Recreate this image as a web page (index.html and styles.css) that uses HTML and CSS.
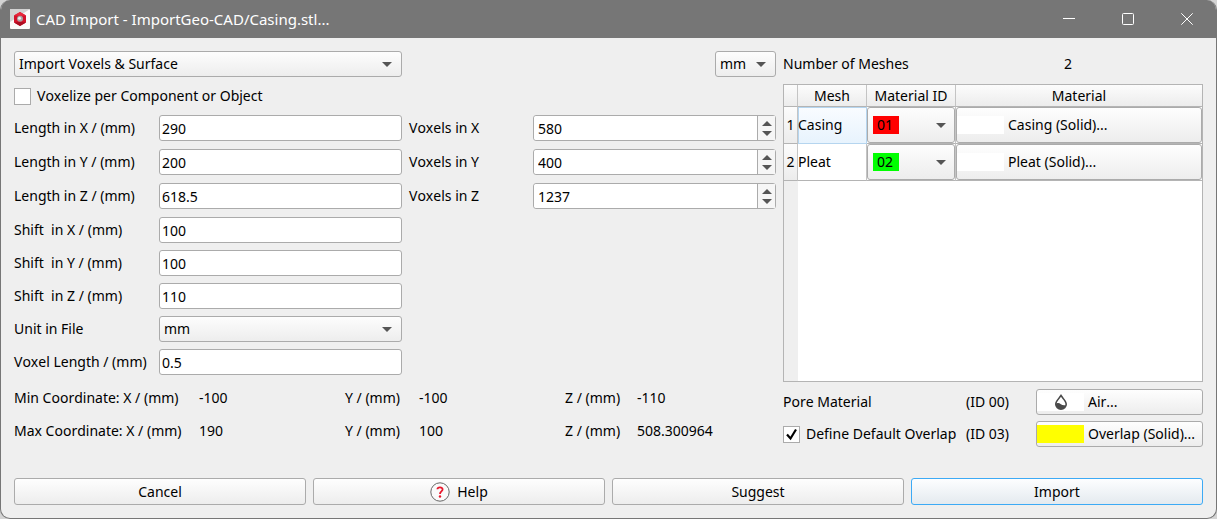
FILE: index.html
```
<!DOCTYPE html>
<html lang="en">
<head>
  <meta charset="UTF-8">
  <meta name="viewport" content="width=device-width, initial-scale=1.0">
  <title>CAD Import</title>
  <link rel="stylesheet" href="styles.css">
</head>
<body>

<section class="window">
  <header class="title-bar">
    <svg class="app-icon" viewBox="0 0 20 20">
      <rect width="20" height="20" rx="1" fill="#fafafa"/>
      <path d="M0 0H20L0 13Z" fill="#d2d2d2"/>
      <path d="M10 3L16 6.5V13.5L10 17L4 13.5V6.5Z" fill="#d3122a"/>
      <path d="M4 6.5L10 3L16 6.5L10 7Z" fill="#e8283c"/>
      <path d="M4 13.5L10 17L16 13.5L10 13Z" fill="#a80c20"/>
      <circle cx="10" cy="9.8" r="3" fill="#a9a2a4"/>
      <circle cx="9.5" cy="9.2" r="1.5" fill="#eee"/>
    </svg>
    <h1>CAD Import - ImportGeo-CAD/Casing.stl...</h1>
    <div class="window-buttons">
      <button aria-label="Minimize"><svg viewBox="0 0 12 12"><path d="M0 5.5H12"/></svg></button>
      <button aria-label="Maximize"><svg viewBox="0 0 12 12"><rect x=".5" y=".5" width="11" height="11" rx="1"/></svg></button>
      <button aria-label="Close"><svg viewBox="0 0 12 12"><path d="M.3 .3L11.7 11.7M11.7 .3L.3 11.7"/></svg></button>
    </div>
  </header>

  <main class="content">
    <section class="settings">
      <div class="mode-row">
        <select class="mode" aria-label="Import mode"><option>Import Voxels &amp; Surface</option></select>
        <select class="unit" aria-label="Unit"><option>mm</option></select>
      </div>
      <label class="check"><input type="checkbox"> Voxelize per Component or Object</label>

      <div class="fields">
        <div class="form-group lengths">
          <label for="length-x">Length in X / (mm)</label>
          <input id="length-x" value="290">
          <label for="length-y">Length in Y / (mm)</label>
          <input id="length-y" value="200">
          <label for="length-z">Length in Z / (mm)</label>
          <input id="length-z" value="618.5">
        </div>
        <div class="form-group voxels">
          <label for="voxels-x">Voxels in X</label>
          <div class="spin">
            <input id="voxels-x" value="580">
            <button class="up" aria-label="Increase X"></button>
            <button class="down" aria-label="Decrease X"></button>
          </div>
          <label for="voxels-y">Voxels in Y</label>
          <div class="spin">
            <input id="voxels-y" value="400">
            <button class="up" aria-label="Increase Y"></button>
            <button class="down" aria-label="Decrease Y"></button>
          </div>
          <label for="voxels-z">Voxels in Z</label>
          <div class="spin">
            <input id="voxels-z" value="1237">
            <button class="up" aria-label="Increase Z"></button>
            <button class="down" aria-label="Decrease Z"></button>
          </div>
        </div>
        <div class="form-group shifts">
          <label for="shift-x">Shift&nbsp; in X / (mm)</label>
          <input id="shift-x" value="100">
          <label for="shift-y">Shift&nbsp; in Y / (mm)</label>
          <input id="shift-y" value="100">
          <label for="shift-z">Shift&nbsp; in Z / (mm)</label>
          <input id="shift-z" value="110">
          <label for="file-unit">Unit in File</label>
          <select id="file-unit"><option>mm</option></select>
          <label for="voxel-length">Voxel Length / (mm)</label>
          <input id="voxel-length" value="0.5">
        </div>
      </div>

      <div class="coordinates">
        <span>Min Coordinate: X / (mm)</span><span>-100</span>
        <span>Y / (mm)</span><span>-100</span>
        <span>Z / (mm)</span><span>-110</span>
        <span>Max Coordinate: X / (mm)</span><span>190</span>
        <span>Y / (mm)</span><span>100</span>
        <span>Z / (mm)</span><span>508.300964</span>
      </div>
    </section>

    <section class="meshes">
      <div class="mesh-count"><span>Number of Meshes</span><span>2</span></div>
      <div class="mesh-list">
        <table>
          <colgroup>
            <col class="col-no"><col class="col-mesh"><col class="col-id"><col>
          </colgroup>
          <thead>
            <tr><th></th><th>Mesh</th><th>Material ID</th><th>Material</th></tr>
          </thead>
          <tbody>
            <tr>
              <th>1</th>
              <td class="selected">Casing</td>
              <td><select class="material-id red" aria-label="Material ID of Casing"><option>01</option></select></td>
              <td><button class="material"><span class="swatch"></span>Casing (Solid)...</button></td>
            </tr>
            <tr>
              <th>2</th>
              <td>Pleat</td>
              <td><select class="material-id green" aria-label="Material ID of Pleat"><option>02</option></select></td>
              <td><button class="material"><span class="swatch"></span>Pleat (Solid)...</button></td>
            </tr>
          </tbody>
        </table>
      </div>
      <div class="default-materials">
        <span>Pore Material</span>
        <span>(ID 00)</span>
        <button class="material">
          <span class="swatch">
            <svg viewBox="0 0 14 18">
              <path d="M7 1C5 4.500 1 8 1 11.200A6 5.800 0 0 0 13 11.200C13 8 9 4.500 7 1Z" fill="#4a4a4a"/>
              <path d="M7 3.800C5.500 6.300 2.800 8.600 2.600 10.600C5.500 8.600 7.500 13.300 11.300 12.200C12.200 9.300 8.500 6.300 7 3.800Z" fill="#fff"/>
            </svg>
          </span>Air...
        </button>
        <label class="check"><input type="checkbox" checked> Define Default Overlap</label>
        <span>(ID 03)</span>
        <button class="material"><span class="swatch yellow"></span>Overlap (Solid)...</button>
      </div>
    </section>
  </main>

  <footer class="actions">
    <button>Cancel</button>
    <button>
      <svg class="help-icon" viewBox="0 0 20 20">
        <circle cx="10" cy="10" r="9.200" fill="#fafafa" stroke="#666"/>
        <path d="M7.400 7.300C7.600 4.700 12.700 4.700 12.600 7.500C12.500 9.400 10 9.600 10 12" fill="none" stroke="#e8182c" stroke-width="1.800"/>
        <circle cx="10" cy="14.500" r="1.200" fill="#e8182c"/>
      </svg>
      Help
    </button>
    <button>Suggest</button>
    <button class="primary">Import</button>
  </footer>
</section>

</body>
</html>
```
FILE: styles.css
```
* {
  box-sizing: border-box;
}
body {
  margin: 0;
  background-color: #d4d4d4;
}
body, button, input, select {
  font-family: "Noto Sans", sans-serif;
  font-size: 14px;
  font-kerning: none;
  line-height: 20px;
  color: #000;
}
.window {
  display: flex;
  flex-direction: column;
  min-height: 100vh;
  border: 1px solid #767676;
  border-top: none;
  border-radius: 10px;
  background-color: #efefef;
  overflow: hidden;
}

/* Title bar */
.title-bar {
  display: flex;
  align-items: center;
  height: 38px;
  padding-left: 9px;
  background-color: #767676;
}
.title-bar h1 {
  flex: 1;
  margin: 0 0 0 6px;
  font-size: 15px;
  font-weight: normal;
  color: #fff;
}
.app-icon {
  width: 20px;
  height: 20px;
}
.window-buttons {
  display: flex;
}
.window-buttons button {
  display: flex;
  justify-content: center;
  align-items: center;
  width: 59px;
  height: 38px;
  padding: 0;
  border: none;
  background: none;
}
.window-buttons svg {
  width: 12px;
  height: 12px;
  fill: none;
  stroke: #fff;
}

/* Controls */
input, select, .material, .actions button {
  height: 26px;
  margin: 0;
  border: 1px solid #ababab;
  border-radius: 3px;
}
input {
  width: 100%;
  min-width: 0;
  padding: 0 2px;
  background-color: #fff;
}
select {
  appearance: none;
  width: 100%;
  padding: 0 4px;
  background: url("data:image/svg+xml,%3Csvg xmlns='http://www.w3.org/2000/svg' width='10' height='5'%3E%3Cpath d='M0 0H10L5 5Z' fill='%23555'/%3E%3C/svg%3E") no-repeat right 9px center, linear-gradient(#fdfdfd, #ededed);
}
.material, .actions button {
  background: linear-gradient(#fefefe, #ededed);
}
.check {
  display: flex;
  align-items: center;
  gap: 6px;
}
.check input {
  appearance: none;
  flex: none;
  width: 17px;
  height: 17px;
  padding: 0;
  border-radius: 0;
}
.check input:checked {
  background: #fff url("data:image/svg+xml,%3Csvg xmlns='http://www.w3.org/2000/svg' width='15' height='15'%3E%3Cpath d='M3 7.500L6.500 11.500L12 2.500' fill='none' stroke='%23000' stroke-width='2.200'/%3E%3C/svg%3E") no-repeat center;
}

/* Content */
.content {
  flex: 1;
  display: grid;
  grid-template-columns: 762fr 420fr;
  gap: 7px;
  padding: 13px 13px 0;
}
.mode-row, .fields {
  display: grid;
  grid-template-columns: 388fr 367fr;
  column-gap: 7px;
}
.unit {
  justify-self: end;
  width: 61px;
}
.settings > .check {
  height: 20px;
  margin: 9px 0;
}
.form-group {
  display: grid;
  grid-template-columns: 145px 1fr;
  align-items: center;
  row-gap: 8px;
}
.voxels {
  grid-template-columns: 124px 1fr;
}
.shifts {
  row-gap: 7px;
  margin-top: 8px;
}
.spin {
  display: grid;
  grid-template-columns: 1fr 18px;
  grid-template-rows: 12px 12px;
  height: 26px;
  border: 1px solid #ababab;
  border-radius: 3px;
  background-color: #fff;
}
.spin input {
  grid-row: 1 / 3;
  height: 24px;
  padding: 1px 4px 0;
  border: none;
}
.spin button {
  padding: 0;
  border: none;
  border-left: 1px solid #ababab;
  background: #f6f6f6 url("data:image/svg+xml,%3Csvg xmlns='http://www.w3.org/2000/svg' width='10' height='5'%3E%3Cpath d='M0 5H10L5 0Z' fill='%23555'/%3E%3C/svg%3E") no-repeat center 5px;
}
.spin .down {
  background-image: url("data:image/svg+xml,%3Csvg xmlns='http://www.w3.org/2000/svg' width='10' height='5'%3E%3Cpath d='M0 0H10L5 5Z' fill='%23555'/%3E%3C/svg%3E");
  background-position: center 3px;
}
.coordinates {
  display: grid;
  grid-template-columns: 185px 146fr 74px 146fr 72px 139fr;
  row-gap: 13px;
  margin-top: 13px;
}

/* Mesh table */
.meshes {
  display: flex;
  flex-direction: column;
}
.mesh-count {
  display: grid;
  grid-template-columns: 281fr 139fr;
  align-items: center;
  height: 26px;
}
.mesh-list {
  flex: 1;
  margin: 7px 0;
  border: 1px solid #b4b4b4;
  background: linear-gradient(90deg, #efefef 14px, #fff 14px);
}
table {
  width: 100%;
  table-layout: fixed;
  border-collapse: separate;
  border-spacing: 0;
}
.col-no {
  width: 14px;
}
.col-mesh {
  width: 69px;
}
.col-id {
  width: 89px;
}
th, td {
  padding: 0;
  border-right: 1px solid #c4c4c4;
  border-bottom: 1px solid #b4b4b4;
  font-weight: normal;
}
th:last-child, td:last-child {
  border-right: none;
}
thead th {
  height: 22px;
  background: linear-gradient(#fcfcfc, #ececec);
}
tbody tr {
  height: 37px;
}
tbody th {
  background: linear-gradient(#fcfcfc, #ececec);
}
td {
  background-color: #fff;
}
td.selected {
  border-color: #b5d5ef;
  background: linear-gradient(#f9fcff, #e7f3fd);
  box-shadow: inset 1px 1px #b5d5ef;
}
td select, td .material {
  display: flex;
  width: 100%;
  height: 36px;
}
.material-id {
  padding: 0 9px;
}
.red {
  background: url("data:image/svg+xml,%3Csvg xmlns='http://www.w3.org/2000/svg' width='10' height='5'%3E%3Cpath d='M0 0H10L5 5Z' fill='%23555'/%3E%3C/svg%3E") no-repeat right 8px center, linear-gradient(#f00, #f00) no-repeat 5px center / 26px 18px, linear-gradient(#fdfdfd, #ededed);
}
.green {
  background: url("data:image/svg+xml,%3Csvg xmlns='http://www.w3.org/2000/svg' width='10' height='5'%3E%3Cpath d='M0 0H10L5 5Z' fill='%23555'/%3E%3C/svg%3E") no-repeat right 8px center, linear-gradient(#0f0, #0f0) no-repeat 5px center / 26px 18px, linear-gradient(#fdfdfd, #ededed);
}
.material {
  display: flex;
  align-items: center;
  gap: 4px;
  padding: 0;
  white-space: nowrap;
}
.swatch {
  display: flex;
  justify-content: center;
  width: 47px;
  height: 18px;
  background-color: #fff;
}
.swatch svg {
  width: 14px;
  height: 18px;
}
.yellow {
  background-color: #ff0;
}
.default-materials {
  display: grid;
  grid-template-columns: 183fr 70px 167px;
  align-items: center;
  row-gap: 6px;
}

/* Footer */
.actions {
  display: grid;
  grid-template-columns: 1fr 1fr 1fr 1fr;
  gap: 7px;
  padding: 31px 13px 13px;
}
.actions button {
  display: flex;
  justify-content: center;
  align-items: center;
  gap: 7px;
  height: 27px;
}
.actions .primary {
  border-color: #3daaf5;
  background: linear-gradient(#fdfeff, #e4eaef);
}
.help-icon {
  width: 20px;
  height: 20px;
}
```
